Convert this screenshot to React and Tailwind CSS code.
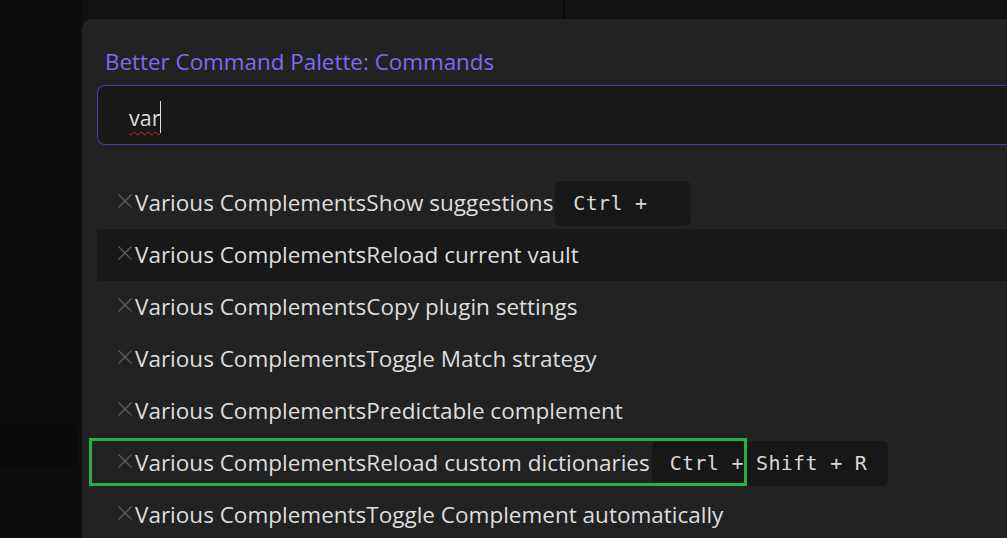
import React from "react";

const rows = [
  { t: "Show suggestions", kbd: "Ctrl +", w: "w-[136px]" },
  { t: "Reload current vault", sel: true },
  { t: "Copy plugin settings" },
  { t: "Toggle Match strategy" },
  { t: "Predictable complement" },
  { t: "Reload custom dictionaries", kbd: "Ctrl + Shift + R", w: "w-[236px]", mark: true },
  { t: "Toggle Complement automatically" },
];

function XIcon() {
  return (
    <svg width="16" height="16" viewBox="0 0 16 16" className="shrink-0 -mt-[5px] mr-[2px]" fill="none">
      <path d="M1.5 1.5 L14.5 14.5 M14.5 1.5 L1.5 14.5" stroke="#5c5c5c" strokeWidth="1.3" />
    </svg>
  );
}

export default function App() {
  return (
    <div className="relative w-[1007px] h-[538px] overflow-hidden bg-[#0c0d0c]" style={{ fontFamily: "'Open Sans', 'Noto Sans', sans-serif" }}>
      {/* background panes */}
      <div className="flex h-full">
        <div className="w-[83px] h-full flex flex-col bg-[#0c0d0c]">
          <div className="h-[424px]" />
          <div className="h-[43px] mr-[5px] rounded-r-[6px] bg-[#090a09]" />
        </div>
        <div className="w-[480px] h-full bg-[#111111] border-l border-[#151515]" />
        <div className="flex-1 h-full bg-[#111111] border-l-2 border-[#0a0a0a]" />
      </div>

      {/* modal */}
      <div className="absolute left-[82px] top-[19px] w-[1000px] h-[560px] rounded-tl-[10px] bg-[#222222] pl-[15px] pt-[28px]">
        <div className="ml-[8px] h-[30px] leading-[30px] text-[22.4px] text-[#7b6cf3] whitespace-nowrap">
          Better Command Palette: Commands
        </div>
        <div className="mt-[8px] h-[60px] rounded-l-[8px] border border-r-0 border-[#4a3d9a] bg-[#181818] flex items-center pl-[31px] pt-[7px]">
          <span className="text-[21.5px] text-[#dcdcdc] underline decoration-wavy decoration-[#e0201a] decoration-1 underline-offset-[5px]">var</span>
          <span className="w-px h-[32px] bg-[#dcdcdc] -mt-[3px]" />
        </div>
        <div className="mt-[32px] flex flex-col">
          {rows.map((r, i) => (
            <div
              key={i}
              className={
                "h-[52px] flex items-center pl-[20px] " + (r.sel ? "bg-[#181818]" : "")
              }
            >
              <XIcon />
              <span className="text-[22.5px] text-[#dedede] whitespace-nowrap">
                Various Complements{r.t}
              </span>
              {r.kbd && (
                <span
                  className={
                    "ml-[2px] h-[45px] flex items-center pl-[18px] rounded-[6px] bg-[#171717] text-[20px] text-[#d8d8d8] whitespace-pre tracking-[0.3px] " + r.w
                  }
                  style={{ fontFamily: "'DejaVu Sans Mono', 'Liberation Mono', monospace" }}
                >
                  {r.kbd}
                </span>
              )}
            </div>
          ))}
        </div>
      </div>

      {/* annotation box */}
      <div className="absolute left-[89px] top-[438px] w-[658px] h-[48px] border-[3px] border-[#22b24a]" />
    </div>
  );
}
